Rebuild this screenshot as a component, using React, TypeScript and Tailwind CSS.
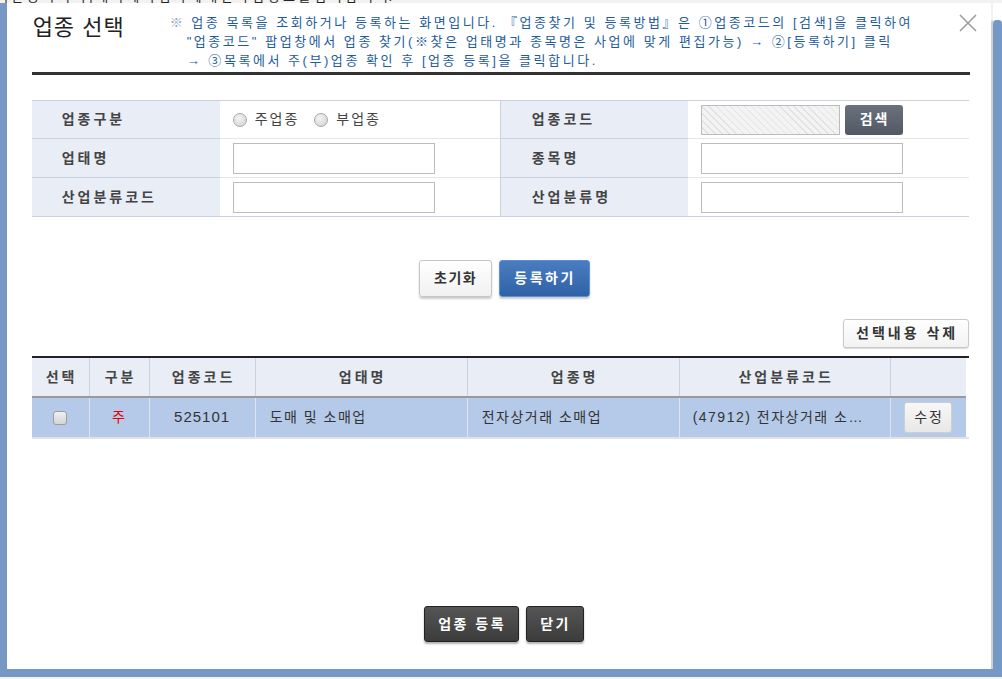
import React from "react";

const font = "font-['Liberation_Sans','Noto_Sans_CJK_KR',sans-serif]";

function Radio({ label }: { label: string }) {
  return (
    <span className="flex items-center gap-[8px]">
      <span className="w-[14px] h-[14px] rounded-full border border-[#a9a9a9] bg-[radial-gradient(circle_at_40%_35%,#f4f4f4,#cfcfcf)]" />
      <span className="text-[14px] tracking-[2px] text-[#444]">{label}</span>
    </span>
  );
}

function TextInput() {
  return <div className="w-[202px] h-[31px] border border-[#bcbcbc] bg-white" />;
}

const lab = "bg-[#e8edf6] flex items-center text-[14px] font-bold tracking-[3px] text-[#444]";

export default function App() {
  const rowB = "border-b border-[#c9d3e0]";
  return (
    <div className={`${font} relative w-[1002px] h-[679px] overflow-hidden bg-[#f3f2f0]`}>
      <div className="absolute left-[0px] top-[-11px] text-[13px] leading-[16px] text-[#222] whitespace-nowrap">
        -| 관 등 록 처 리 | 내 과 세 사 업 자 에 대 한 사 업 정 보 를 입 력 합 니 다.
      </div>
      <div className="absolute left-0 top-[3px] w-[1002px] h-[674px] flex flex-col">
        <div className="flex flex-1 min-h-0">
          <div className="w-[7px] bg-[#7698c4]" />
          <div className="flex-1 bg-white flex flex-col pl-[25px] pr-[21px] relative">
            {/* header */}
            <div className="flex pt-[10px]">
              <div className="w-[138px] pl-[1px] text-[22px] leading-[30px] tracking-[1px] text-[#222]">업종 선택</div>
              <div className="text-[13px] leading-[19px] tracking-[2.55px] text-[#1d5c9e] whitespace-nowrap">
                <div><span className="text-[#8aa4c8]">※</span> 업종 목록을 조회하거나 등록하는 화면입니다. 『업종찾기 및 등록방법』은 ①업종코드의 [검색]을 클릭하여</div>
                <div className="pl-[17px]">"업종코드" 팝업창에서 업종 찾기(※찾은 업태명과 종목명은 사업에 맞게 편집가능) → ②[등록하기] 클릭</div>
                <div className="pl-[17px]">→ ③목록에서 주(부)업종 확인 후 [업종 등록]을 클릭합니다.</div>
              </div>
            </div>
            <div className="absolute right-[13px] top-[10px] w-[20px] h-[20px]">
              <svg viewBox="0 0 20 20" width="20" height="20">
                <path d="M2 2 L18 18 M18 2 L2 18" stroke="#9a9a9a" strokeWidth="1.5" />
              </svg>
            </div>
            <div className="mt-[2px] h-[3px] bg-[#333] w-[938px]" />

            {/* form */}
            <div className="mt-[25px] w-[937px] border-t border-[#c9d3e0] grid grid-cols-[188px_280px_188px_281px]">
              <div className={`h-[38px] ${rowB} ${lab} pl-[30px]`}>업종구분</div>
              <div className={`h-[38px] border-b border-[#e6e6e6] flex items-center pl-[13px] gap-[15px]`}>
                <Radio label="주업종" />
                <Radio label="부업종" />
              </div>
              <div className={`h-[38px] ${rowB} ${lab} pl-[31px] border-l border-[#c9d3e0]`}>업종코드</div>
              <div className={`h-[38px] border-b border-[#e6e6e6] flex items-center pl-[13px] gap-[5px]`}>
                <div className="w-[139px] h-[30px] border border-[#bcbcbc] bg-[repeating-linear-gradient(45deg,#f3f3f3_0px,#f3f3f3_4px,#e2e2e2_4px,#e2e2e2_5px)]" />
                <div className="w-[58px] h-[30px] rounded-[3px] bg-[linear-gradient(#6a717c,#525964)] text-white text-[14px] font-bold tracking-[2px] pl-[2px] flex items-center justify-center">검색</div>
              </div>
              <div className={`h-[39px] ${rowB} ${lab} pl-[30px]`}>업태명</div>
              <div className={`h-[39px] border-b border-[#e6e6e6] flex items-center pl-[13px]`}><TextInput /></div>
              <div className={`h-[39px] ${rowB} ${lab} pl-[31px] border-l border-[#c9d3e0]`}>종목명</div>
              <div className={`h-[39px] border-b border-[#e6e6e6] flex items-center pl-[13px]`}><TextInput /></div>
              <div className={`h-[39px] ${rowB} ${lab} pl-[30px]`}>산업분류코드</div>
              <div className={`h-[39px] ${rowB} flex items-center pl-[13px]`}><TextInput /></div>
              <div className={`h-[39px] ${rowB} ${lab} pl-[31px] border-l border-[#c9d3e0]`}>산업분류명</div>
              <div className={`h-[39px] ${rowB} flex items-center pl-[13px]`}><TextInput /></div>
            </div>

            {/* action buttons */}
            <div className="mt-[43px] flex gap-[7px] pl-[387px]">
              <div className="w-[73px] h-[37px] rounded-[3px] border border-[#c6c6c6] bg-[linear-gradient(#ffffff,#f1f1f1)] shadow-[0_2px_2px_rgba(0,0,0,0.2)] flex items-center justify-center text-[14px] font-bold tracking-[1.5px] pl-[1px] text-[#333]">초기화</div>
              <div className="w-[91px] h-[37px] rounded-[3px] border border-[#5b8fdc] bg-[linear-gradient(#4a7dc0,#2f61a6)] shadow-[0_2px_2px_rgba(0,0,0,0.2)] flex items-center justify-center text-[14px] font-bold tracking-[2.5px] pl-[2px] text-white">등록하기</div>
            </div>

            <div className="mt-[22px] w-[937px] flex justify-end">
              <div className="w-[126px] h-[29px] rounded-[3px] border border-[#c9c9c9] bg-[linear-gradient(#ffffff,#f2f2f2)] shadow-[0_1px_1px_rgba(0,0,0,0.15)] flex items-center justify-center text-[14px] font-bold tracking-[3px] pl-[3px] text-[#333]">선택내용 삭제</div>
            </div>

            {/* list table */}
            <div className="mt-[8px] w-[937px] border-t-2 border-[#222]">
              <div className="w-[934px]">
                <div className="grid grid-cols-[58px_60px_106px_212px_212px_211px_75px] h-[40px] bg-[#e8edf6] border-b-2 border-[#9a9a9a] text-[14px] font-bold tracking-[3px] text-[#444]">
                  {["선택", "구분", "업종코드", "업태명", "업종명", "산업분류코드", ""].map((h, i) => (
                    <div key={i} className={`flex items-center justify-center pl-[3px] ${i < 6 ? "border-r border-[#c8d2e0]" : ""}`}>{h}</div>
                  ))}
                </div>
                <div className="grid grid-cols-[58px_60px_106px_212px_212px_211px_75px] h-[39px] bg-[#b5cae9] text-[14px] tracking-[1.5px] text-[#333]">
                  <div className="flex items-center justify-center border-r border-[#dde4ee]">
                    <span className="w-[14px] h-[14px] rounded-[3px] border border-[#9c9c9c] bg-[linear-gradient(#f0f0f0,#d4d4d4)]" />
                  </div>
                  <div className="flex items-center justify-center border-r border-[#dde4ee] text-[#e60000]">주</div>
                  <div className="flex items-center justify-center border-r border-[#dde4ee] tracking-[1px] text-[15px]">525101</div>
                  <div className="flex items-center pl-[14px] border-r border-[#dde4ee]">도매 및 소매업</div>
                  <div className="flex items-center pl-[14px] border-r border-[#dde4ee]">전자상거래 소매업</div>
                  <div className="flex items-center pl-[13px] pr-[8px] border-r border-[#dde4ee] whitespace-nowrap overflow-hidden">
                    <span className="truncate">(47912) 전자상거래 소…</span>
                  </div>
                  <div className="flex items-center justify-center">
                    <div className="w-[48px] h-[31px] rounded-[3px] border border-[#cfcfcf] bg-[linear-gradient(#f7f7f7,#e8e8e8)] flex items-center justify-center text-[14px] tracking-[2px] pl-[2px] text-[#333]">수정</div>
                  </div>
                </div>
              </div>
              <div className="h-[2px] bg-[#e2e2e2]" />
            </div>

            <div className="flex-1" />
            <div className="flex gap-[7px] pl-[392px] mb-[27px]">
              <div className="w-[95px] h-[36px] rounded-[3px] border border-[#222] bg-[linear-gradient(#555,#3c3c3c)] shadow-[0_2px_2px_rgba(0,0,0,0.3)] flex items-center justify-center text-[14px] font-bold tracking-[2.5px] pl-[2px] text-white">업종 등록</div>
              <div className="w-[58px] h-[36px] rounded-[3px] border border-[#222] bg-[linear-gradient(#555,#3c3c3c)] shadow-[0_2px_2px_rgba(0,0,0,0.3)] flex items-center justify-center text-[14px] font-bold tracking-[2.5px] pl-[2px] text-white">닫기</div>
            </div>
          </div>
          <div className="w-[3px] bg-[#cfcfcf] mt-[17px] rounded-tl-[3px]" />
          <div className="w-[9px] flex flex-col">
            <div className="h-[17px] bg-white" />
            <div className="flex-1 bg-[#7698c4] rounded-t-[4px]" />
          </div>
        </div>
        <div className="h-[8px] bg-[#7698c4]" />
      </div>
    </div>
  );
}
